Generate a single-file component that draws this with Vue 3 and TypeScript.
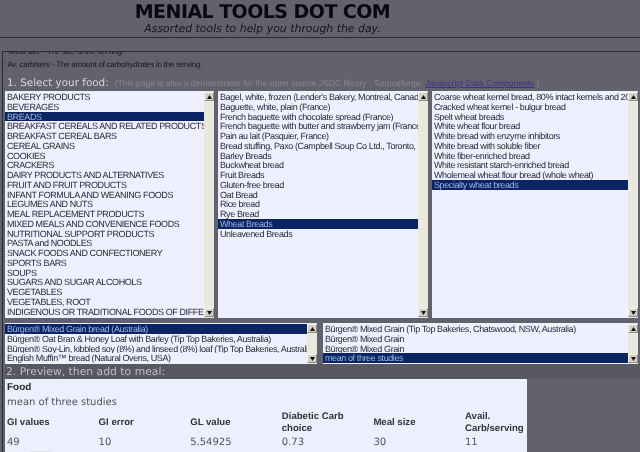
<script setup lang="ts">
const groups: string[] = ['BAKERY PRODUCTS','BEVERAGES','BREADS','BREAKFAST CEREALS AND RELATED PRODUCTS','BREAKFAST CEREAL BARS','CEREAL GRAINS','COOKIES','CRACKERS','DAIRY PRODUCTS AND ALTERNATIVES','FRUIT AND FRUIT PRODUCTS','INFANT FORMULA AND WEANING FOODS','LEGUMES AND NUTS','MEAL REPLACEMENT PRODUCTS','MIXED MEALS AND CONVENIENCE FOODS','NUTRITIONAL SUPPORT PRODUCTS','PASTA and NOODLES','SNACK FOODS AND CONFECTIONERY','SPORTS BARS','SOUPS','SUGARS AND SUGAR ALCOHOLS','VEGETABLES','VEGETABLES, ROOT','INDIGENOUS OR TRADITIONAL FOODS OF DIFFERENT CULTURES']
const breads: string[] = ['Bagel, white, frozen (Lender\'s Bakery, Montreal, Canada)','Baguette, white, plain (France)','French baguette with chocolate spread (France)','French baguette with butter and strawberry jam (France)','Pain au lait (Pasquier, France)','Bread stuffing, Paxo (Campbell Soup Co Ltd., Toronto, Canada)','Barley Breads','Buckwheat bread','Fruit Breads','Gluten-free bread','Oat Bread','Rice bread','Rye Bread','Wheat Breads','Unleavened Breads']
const wheat: string[] = ['Coarse wheat kernel bread, 80% intact kernels and 20% white','Cracked wheat kernel - bulgur bread','Spelt wheat breads','White wheat flour bread','White bread with enzyme inhibitors','White bread with soluble fiber','White fiber-enriched bread','White resistant starch-enriched bread','Wholemeal wheat flour bread (whole wheat)','Specialty wheat breads']
const products: string[] = ['Bürgen® Mixed Grain bread (Australia)','Bürgen® Oat Bran & Honey Loaf with Barley (Tip Top Bakeries, Australia)','Bürgen® Soy-Lin, kibbled soy (8%) and linseed (8%) loaf (Tip Top Bakeries, Australia)','English Muffin™ bread (Natural Ovens, USA)']
const studies: string[] = ['Bürgen® Mixed Grain (Tip Top Bakeries, Chatswood, NSW, Australia)','Bürgen® Mixed Grain','Bürgen® Mixed Grain','mean of three studies']

interface ListDef { items: string[]; selected: number }
const topLists: ListDef[] = [
  { items: groups, selected: 2 },
  { items: breads, selected: 13 },
  { items: wheat, selected: 9 },
]
const bottomLists: ListDef[] = [
  { items: products, selected: 0 },
  { items: studies, selected: 3 },
]
const columns: { head: string; value: string }[] = [
  { head: 'GI values', value: '49' },
  { head: 'GI error', value: '10' },
  { head: 'GL value', value: '5.54925' },
  { head: 'Diabetic Carb choice', value: '0.73' },
  { head: 'Meal size', value: '30' },
  { head: 'Avail. Carb/serving', value: '11' },
]
</script>

<template>
  <div class="page">
    <header class="masthead">
      <h1>MENIAL TOOLS DOT COM</h1>
      <p>Assorted tools to help you through the day.</p>
    </header>
    <div class="rule-gap"></div>
    <main class="content">
      <div class="notes">
        <div class="clipped"><span>Meal size - The size of the serving.</span></div>
        <div class="note">* Av. carb/serv - The amount of carbohydrates in the serving.</div>
      </div>
      <div class="step-one">
        <span class="step-title">1. Select your food:</span>
        <span class="step-info">(This page is also a demonstrator for the open source JSDC library - Sourceforge: <a>Javascript Data Components</a> )</span>
      </div>
      <div class="top-lists">
        <div v-for="(l, i) in topLists" :key="i" class="listbox">
          <div class="rows">
            <div v-for="(t, j) in l.items" :key="j" class="row" :class="{ sel: j === l.selected }">{{ t }}</div>
          </div>
          <div class="scroll">
            <span class="btn"><svg width="5" height="4" viewBox="0 0 5 4"><path d="M2.5 0 5 4H0z" /></svg></span>
            <span class="btn"><svg width="5" height="4" viewBox="0 0 5 4"><path d="M0 0h5L2.5 4z" /></svg></span>
          </div>
        </div>
      </div>
      <div class="bottom-lists">
        <div v-for="(l, i) in bottomLists" :key="i" class="listbox">
          <div class="rows">
            <div v-for="(t, j) in l.items" :key="j" class="row" :class="{ sel: j === l.selected }">{{ t }}</div>
          </div>
          <div class="scroll">
            <span class="btn"><svg width="5" height="4" viewBox="0 0 5 4"><path d="M2.5 0 5 4H0z" /></svg></span>
            <span class="btn"><svg width="5" height="4" viewBox="0 0 5 4"><path d="M0 0h5L2.5 4z" /></svg></span>
          </div>
        </div>
      </div>
      <div class="step-two">2. Preview, then add to meal:</div>
      <section class="card">
        <div class="food-label">Food</div>
        <div class="food-name">mean of three studies</div>
        <div class="stats">
          <div v-for="c in columns" :key="c.head" class="stat-head">{{ c.head }}</div>
          <div v-for="c in columns" :key="c.head + 'v'" class="stat-val">{{ c.value }}</div>
        </div>
        <div class="add-btn"></div>
      </section>
    </main>
  </div>
</template>

<style>
html, body { margin: 0; background: #62626f; overflow: hidden; }
</style>

<style scoped>
.page {
  width: 640px;
  height: 452px;
  overflow: hidden;
  background: #62626f;
  font-family: "Liberation Sans", Arial, sans-serif;
  color: #24242c;
  text-rendering: geometricPrecision;
  filter: blur(0.4px);
}
.masthead {
  height: 37px;
  border-bottom: 1px solid #2a2a33;
  text-align: center;
  white-space: nowrap;
}
.masthead h1 {
  width: 525px;
  margin: 0;
  padding-top: 2px;
  font: bold 19px/20px "DejaVu Sans", sans-serif;
  letter-spacing: -0.55px;
  color: #08080f;
}
.masthead p {
  width: 525px;
  margin: 0;
  font: italic 10.9px/13px "DejaVu Sans", sans-serif;
  color: #14141c;
}
.rule-gap { height: 13px; }
.content {
  border-top: 1px solid #2a2a33;
  border-left: 1px solid #2a2a33;
  margin-left: 2px;
  padding-left: 2px;
  height: 400px;
}
.notes {
  height: 17px;
  font-size: 8px;
  letter-spacing: -0.25px;
  color: #16161c;
  overflow: hidden;
}
.clipped {
  height: 5px;
  display: flex;
  align-items: flex-end;
  overflow: hidden;
  padding-left: 4px;
}
.clipped span { line-height: 10px; flex: none; }
.note { line-height: 10px; margin: 3px 0 0 -2px; }
.step-one {
  height: 22px;
  box-sizing: border-box;
  padding: 6px 0 0 2px;
  display: flex;
  align-items: center;
  white-space: nowrap;
}
.step-title { font: 10.4px/16px "DejaVu Sans", sans-serif; color: #d6d6de; margin-right: 6px; }
.step-info { font-size: 8.5px; color: #878793; }
.step-info a { color: #3f2f85; text-decoration: underline; }
.top-lists {
  display: grid;
  grid-template-columns: 209px 210px 206px;
  gap: 4px;
  height: 227px;
}
.bottom-lists {
  display: grid;
  grid-template-columns: 312px 315px;
  gap: 6px;
  height: 41px;
  margin-top: 5px;
}
.listbox {
  display: flex;
  background: #eef0fd;
  overflow: hidden;
  min-width: 0;
}
.rows {
  flex: 1;
  min-width: 0;
  padding-top: 1px;
  overflow: hidden;
}
.row {
  height: 9.75px;
  line-height: 10.5px;
  font-size: 9px;
  letter-spacing: -0.4px;
  padding-left: 2px;
  color: #2a2a35;
  white-space: nowrap;
  overflow: hidden;
}
.row.sel { background: #0b2463; color: #9fb4e0; }
.scroll {
  width: 10px;
  flex: none;
  background: #e9e9dd;
  display: flex;
  flex-direction: column;
  justify-content: space-between;
  padding: 1px 0;
  box-sizing: border-box;
}
.btn {
  height: 9px;
  background: #d4d0c8;
  border: 1px solid #8f8d88;
  border-top-color: #f4f4f0;
  border-left-color: #f4f4f0;
  box-sizing: border-box;
  display: flex;
  align-items: center;
  justify-content: center;
}
.btn svg { fill: #111; display: block; }
.step-two {
  height: 15px;
  padding-left: 1px;
  font: 10.8px/15px "DejaVu Sans", sans-serif;
  color: #bcbcc6;
  background: #585863;
}
.card {
  width: 522px;
  height: 90px;
  background: #eeeffc;
  padding: 3px 2px 0;
  box-sizing: border-box;
  font-family: "DejaVu Sans", sans-serif;
}
.food-label { font: bold 10px/12px "Liberation Sans", sans-serif; color: #2a2a33; }
.food-name { line-height: 17px; color: #52525c; font-size: 10px; }
.stats {
  display: grid;
  grid-template-columns: repeat(6, 91.6px);
  align-items: center;
  margin-top: -1px;
}
.stat-head {
  font: bold 9.6px/12px "Liberation Sans", sans-serif;
  color: #33333c;
  height: 25px;
  display: flex;
  align-items: center;
  padding-right: 24px;
  box-sizing: border-box;
}
.stat-val { line-height: 16px; color: #52525c; font-size: 10px; }
.add-btn {
  width: 25px;
  height: 6px;
  margin-left: 22px;
  background: #e2e2ec;
  border-radius: 4px 4px 0 0;
}
</style>
